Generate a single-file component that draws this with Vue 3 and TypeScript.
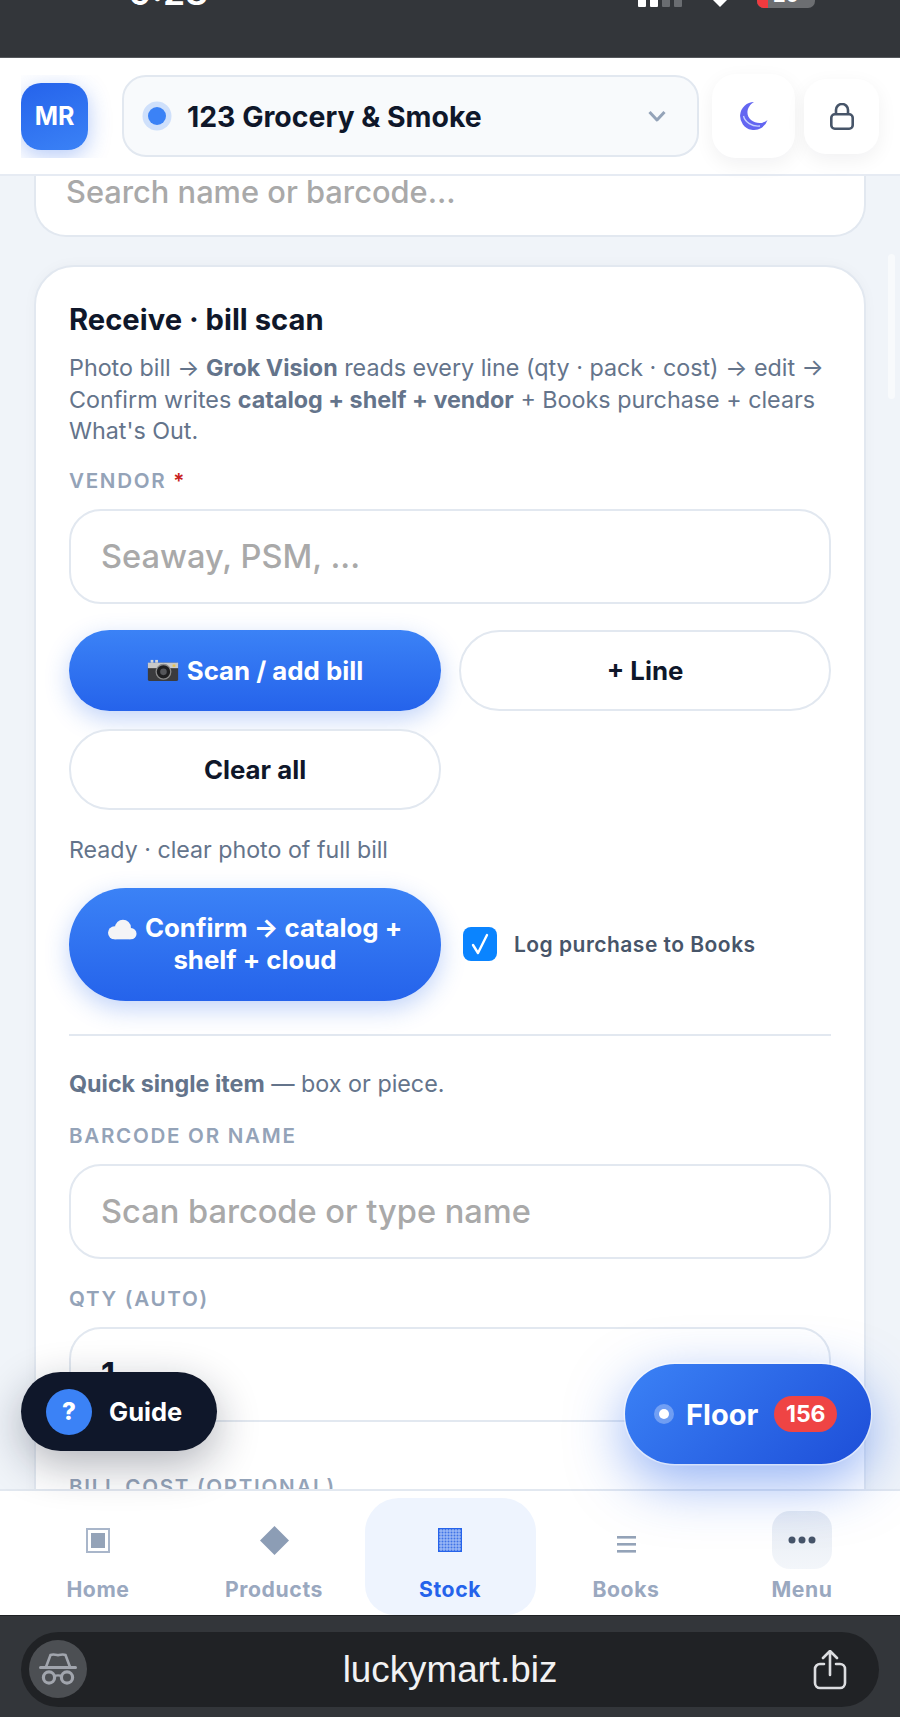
<script setup lang="ts">
interface Tab {
  label: string
  icon: string
  active?: boolean
}

const tabs: Tab[] = [
  { label: 'Home', icon: 'home' },
  { label: 'Products', icon: 'diamond' },
  { label: 'Stock', icon: 'grid', active: true },
  { label: 'Books', icon: 'lines' },
  { label: 'Menu', icon: 'dots' }
]

// little grid glyph for the Stock tab
const gridLines = [3, 6, 9, 12, 15, 18, 21]
</script>

<template>
  <div class="phone">
    <div class="status-bar">
      <span class="time">9:28</span>
      <div class="status-icons">
        <div class="signal"><i></i><i></i><i class="dim"></i><i class="dim"></i></div>
        <span class="wifi"></span>
        <div class="battery"><span class="battery-red"></span><span class="battery-num">20</span></div>
      </div>
    </div>

    <header class="topbar">
      <div class="avatar-wrap"><div class="avatar">MR</div></div>
      <div class="store-select">
        <span class="store-dot"></span>
        <span class="store-name">123 Grocery &amp; Smoke</span>
        <svg class="chevron" width="20" height="14" viewBox="0 0 20 14" fill="none">
          <path d="M2.500 3l7.500 8 7.500-8" stroke="#94a3b8" stroke-width="3" stroke-linejoin="round" />
        </svg>
      </div>
      <button class="icon-btn moon-btn">
        <svg width="30" height="30" viewBox="0 0 30 30">
          <path d="M15 1A14 14 0 1 0 28.500 19C24 23 17 23 12 19 6 14 8 5 15 1z" fill="#6366f1" />
          <path d="M4.500 15C6 21 13 26 21 25" fill="none" stroke="#c7d2fe" stroke-width="1.300" />
        </svg>
      </button>
      <button class="icon-btn lock-btn">
        <svg width="24" height="27" viewBox="0 0 24 27" fill="none" stroke="#475569" stroke-width="2.600">
          <rect x="1.300" y="11.300" width="21.400" height="14.400" rx="3.500" />
          <path d="M6 11V7a6 6 0 0 1 12 0v4" />
        </svg>
      </button>
    </header>

    <main class="content">
      <div class="search-card">
        <span class="placeholder">Search name or barcode...</span>
      </div>

      <section class="card">
        <h2 class="card-title">Receive · bill scan</h2>
        <p class="desc">
          Photo bill → <b>Grok Vision</b> reads every line (qty · pack · cost) → edit →
          Confirm writes <b>catalog + shelf + vendor</b> + Books purchase + clears What's Out.
        </p>

        <label class="field-label">VENDOR <em>*</em></label>
        <div class="input"><span class="placeholder">Seaway, PSM, ...</span></div>

        <div class="btn-grid">
          <button class="btn primary">
            <svg class="emoji" width="32" height="22" viewBox="0 0 33 24">
              <rect x="0" y="4" width="33" height="20" rx="2" fill="#3b3b3d" />
              <rect x="0" y="4" width="33" height="6" fill="#c9c9c9" />
              <rect x="3" y="1" width="3" height="3" fill="#d8d8d8" />
              <rect x="8" y="1" width="3" height="3" fill="#d8d8d8" />
              <circle cx="17" cy="14" r="8" fill="#1f1f21" stroke="#8a8a8a" stroke-width="1.400" />
              <circle cx="17" cy="14" r="3.600" fill="#55565a" />
              <rect x="27" y="6" width="3" height="2.500" fill="#e8c34a" />
            </svg>
            Scan / add bill
          </button>
          <button class="btn plain">+ Line</button>
          <button class="btn plain">Clear all</button>
        </div>

        <p class="hint">Ready · clear photo of full bill</p>

        <div class="confirm-row">
          <button class="btn primary confirm">
            <span>
              <svg class="emoji cloud" width="29" height="21" viewBox="0 0 31 21" fill="#f4f4f6">
                <circle cx="16" cy="8.500" r="8.500" />
                <circle cx="7" cy="14" r="7" />
                <circle cx="24.500" cy="15" r="6" />
                <rect x="7" y="13" width="17" height="8" />
              </svg>
              Confirm → catalog + shelf + cloud
            </span>
          </button>
          <label class="check-row">
            <span class="checkbox">
              <svg width="24" height="26" viewBox="0 0 24 26" fill="none">
                <path d="M5 14l5 8L19 4" stroke="#fff" stroke-width="2.400" stroke-linecap="round" stroke-linejoin="round" />
              </svg>
            </span>
            Log purchase to Books
          </label>
        </div>

        <hr class="divider" />

        <p class="quick"><b>Quick single item</b> — box or piece.</p>

        <label class="field-label barcode-label">BARCODE OR NAME</label>
        <div class="input"><span class="placeholder">Scan barcode or type name</span></div>

        <label class="field-label qty-label">QTY (AUTO)</label>
        <div class="input"><span class="value">1</span></div>

        <label class="field-label cost-label">BILL COST (OPTIONAL)</label>
      </section>

      <div class="scroll-thumb"></div>
    </main>

    <nav class="tabbar">
      <div v-for="tab in tabs" :key="tab.label" class="tab" :class="{ active: tab.active }">
        <span class="tab-icon" :class="{ 'menu-icon': tab.icon === 'dots', 'lines-icon': tab.icon === 'lines' }">
          <svg v-if="tab.icon === 'home'" width="24" height="25" viewBox="0 0 24 25">
            <rect x="1" y="1" width="22" height="23" fill="none" stroke="#a9b6ca" stroke-width="2" />
            <rect x="5" y="5" width="14" height="15" fill="#94a3b8" />
          </svg>
          <svg v-else-if="tab.icon === 'diamond'" width="29" height="29" viewBox="0 0 29 29">
            <path d="M14.500 0L29 14.500 14.500 29 0 14.500z" fill="#8c9db5" />
          </svg>
          <svg v-else-if="tab.icon === 'grid'" width="24" height="24" viewBox="0 0 24 24">
            <rect x="0.500" y="0.500" width="23" height="23" fill="#3f73e6" stroke="#2563eb" />
            <path v-for="n in gridLines" :key="n" :d="`M${n} 1V23M1 ${n}H23`" stroke="#b9cffa" stroke-width="0.900" />
          </svg>
          <svg v-else-if="tab.icon === 'lines'" width="19" height="17" viewBox="0 0 19 17" fill="#94a3b8">
            <rect x="0" y="0" width="19" height="2.600" />
            <rect x="0" y="7" width="19" height="2.600" />
            <rect x="0" y="14" width="19" height="2.600" />
          </svg>
          <svg v-else width="28" height="8" viewBox="0 0 28 8" fill="#475569">
            <circle cx="4" cy="4" r="3.500" />
            <circle cx="14" cy="4" r="3.500" />
            <circle cx="24" cy="4" r="3.500" />
          </svg>
        </span>
        <span class="tab-label">{{ tab.label }}</span>
      </div>
    </nav>

    <div class="browser-bar">
      <div class="url-pill">
        <span class="incognito">
          <svg width="38" height="34" viewBox="0 0 38 34" fill="none" stroke="#a1a5ad">
            <path d="M7 15L11.500 3c2.500-1 5-.3 7.500.2 2.500-.5 5-1.200 7.500-.2L31 15" stroke-width="2.600" />
            <path d="M1.500 15.500h35" stroke-width="3" stroke-linecap="round" />
            <circle cx="10" cy="25.500" r="5.600" stroke-width="3.200" />
            <circle cx="28" cy="25.500" r="5.600" stroke-width="3.200" />
            <path d="M15 24.500c2.500-1.300 5.500-1.300 8 0" stroke-width="2.200" />
          </svg>
        </span>
        <span class="url">luckymart.biz</span>
        <svg class="share" width="34" height="40" viewBox="0 0 34 40" fill="none" stroke="#dcdde0" stroke-width="2.600" stroke-linecap="round" stroke-linejoin="round">
          <path d="M17 25V2M10 8l7-7 7 7" />
          <path d="M11 14H7a5 5 0 0 0-5 5v14a5 5 0 0 0 5 5h20a5 5 0 0 0 5-5V19a5 5 0 0 0-5-5h-4" />
        </svg>
      </div>
    </div>

    <button class="guide-fab"><span class="guide-q">?</span>Guide</button>
    <button class="floor-fab">
      <span class="floor-dot"></span>
      <span class="floor-text">Floor</span>
      <span class="floor-badge">156</span>
    </button>
  </div>
</template>

<style>
html,
body {
  margin: 0;
  background: #f0f4f9;
}
</style>

<style scoped>
.phone {
  position: relative;
  width: 900px;
  height: 1717px;
  display: flex;
  flex-direction: column;
  overflow: hidden;
  background: #f0f4f9;
  font-family: Inter, "Liberation Sans", sans-serif;
  color: #0f172a;
}

button {
  font-family: inherit;
  border: none;
  padding: 0;
}

/* device chrome, top */
.status-bar {
  position: relative;
  flex: 0 0 58px;
  background: #33363a;
  overflow: hidden;
  box-sizing: border-box;
  border-bottom: 1px solid #55585c;
}

.time {
  position: absolute;
  left: 129px;
  top: -26px;
  color: #fff;
  font-size: 35.500px;
  font-weight: 600;
  line-height: 38px;
}

.status-icons {
  position: absolute;
  left: 638px;
  top: -20px;
  display: flex;
  align-items: flex-start;
  gap: 25px;
}

.signal {
  display: flex;
  gap: 4px;
}

.signal i {
  width: 8px;
  height: 27px;
  border-radius: 1px;
  background: #fff;
}

.signal i.dim {
  background: #6a6d71;
}

.wifi {
  margin-top: 14px;
  width: 0;
  height: 0;
  border-left: 13px solid transparent;
  border-right: 13px solid transparent;
  border-top: 13px solid #fff;
}

.battery {
  position: relative;
  width: 58px;
  height: 24px;
  margin-top: 4px;
  margin-left: -1px;
  border-radius: 7px;
  background: #6c6e71;
  overflow: hidden;
}

.battery-red {
  position: absolute;
  inset: 0 auto 0 0;
  width: 11px;
  background: #f03a3f;
}

.battery-num {
  position: absolute;
  left: 0;
  right: 0;
  top: -1px;
  text-align: center;
  color: #fff;
  font-size: 20px;
  font-weight: 700;
}

/* app header */
.topbar {
  position: relative;
  z-index: 2;
  flex: 0 0 118px;
  box-sizing: border-box;
  display: flex;
  align-items: center;
  padding: 0 21px;
  background: #fff;
  border-bottom: 2px solid #e6ebf3;
}

.avatar-wrap {
  flex: 0 0 101px;
  height: 83px;
  display: flex;
  align-items: center;
  overflow: hidden;
}

.avatar {
  width: 67px;
  height: 67px;
  border-radius: 20px;
  display: flex;
  align-items: center;
  justify-content: center;
  background: linear-gradient(160deg, #2563eb, #3b82f6);
  box-shadow: 0 6px 22px rgba(37, 99, 235, 0.34);
  color: #fff;
  font-size: 25px;
  font-weight: 700;
}

.store-select {
  flex: 0 0 577px;
  height: 82px;
  box-sizing: border-box;
  display: flex;
  align-items: center;
  padding: 0 30px 0 24px;
  border: 2px solid #e2e8f0;
  border-radius: 24px;
  background: #f8fafc;
}

.store-dot {
  width: 18px;
  height: 18px;
  border-radius: 50%;
  background: #3b82f6;
  box-shadow: 0 0 0 5.500px #cfe0fb;
}

.store-name {
  margin-left: 21px;
  flex: 1;
  font-size: 28.400px;
  font-weight: 700;
  white-space: nowrap;
}

.icon-btn {
  display: flex;
  align-items: center;
  justify-content: center;
  background: #fff;
  box-shadow: 0 6px 20px rgba(15, 23, 42, 0.06);
}

.moon-btn {
  margin-left: 13px;
  width: 83px;
  height: 84px;
  border-radius: 24px;
}

.lock-btn {
  margin-left: 9px;
  width: 75px;
  height: 75px;
  border-radius: 22px;
}

/* scrolled page */
.content {
  position: relative;
  flex: 1;
  min-height: 0;
  overflow: hidden;
  padding: 0 34px;
  display: flex;
  flex-direction: column;
  gap: 28px;
}

.search-card {
  flex: none;
  height: 61px;
  box-sizing: border-box;
  display: flex;
  align-items: flex-start;
  padding: 0 30px;
  background: #fff;
  border: 2px solid #e2e8f0;
  border-top: none;
  border-radius: 0 0 32px 32px;
}

.search-card .placeholder {
  font-size: 30.800px;
  line-height: 32px;
}

.placeholder {
  color: #a9a9a9;
  font-size: 32.600px;
  font-weight: 500;
  white-space: nowrap;
}

.card {
  flex: none;
  box-sizing: border-box;
  padding: 36px 33px 80px;
  background: #fff;
  border: 2px solid #e2e8f0;
  border-radius: 40px;
  box-shadow: 0 0 14px rgba(15, 23, 42, 0.03);
}

.card-title {
  margin: 0;
  font-size: 29.200px;
  line-height: 34px;
  font-weight: 700;
}

.desc {
  margin: 15px 0 0;
  font-size: 23.300px;
  line-height: 31.500px;
  color: #64748b;
}

.desc b,
.quick b {
  font-weight: 700;
}

.field-label {
  display: block;
  margin-top: 22px;
  font-size: 20.600px;
  line-height: 24px;
  font-weight: 600;
  letter-spacing: 1.700px;
  color: #94a3b8;
}

.field-label em {
  font-style: normal;
  color: #c81e1e;
}

.barcode-label {
  margin-top: 25px;
}

.qty-label {
  margin-top: 28px;
}

.cost-label {
  margin-top: 53px;
}

.input {
  margin-top: 16px;
  height: 95px;
  box-sizing: border-box;
  display: flex;
  align-items: center;
  padding: 0 30px;
  border: 2px solid #e2e8f0;
  border-radius: 32px;
  background: #fff;
}

.value {
  font-size: 32.600px;
  font-weight: 700;
}

.btn-grid {
  margin-top: 26px;
  display: grid;
  grid-template-columns: 1fr 1fr;
  gap: 18px;
}

.btn {
  height: 81px;
  border-radius: 41px;
  display: flex;
  align-items: center;
  justify-content: center;
  font-size: 25.800px;
  font-weight: 700;
  text-align: center;
}

.primary {
  color: #fff;
  background: linear-gradient(180deg, #3b82f6, #2563eb);
  box-shadow: 0 8px 24px rgba(37, 99, 235, 0.28);
}

.plain {
  color: #0f172a;
  background: #fff;
  border: 2px solid #e2e8f0;
}

.emoji {
  margin-right: 8px;
  vertical-align: -3px;
}

.cloud {
  margin-right: 2px;
}

.hint {
  margin: 26px 0 0;
  font-size: 23.200px;
  line-height: 28px;
  color: #64748b;
}

.confirm-row {
  margin-top: 24px;
  display: grid;
  grid-template-columns: 372px 1fr;
  column-gap: 22px;
  align-items: center;
}

.confirm {
  height: 113px;
  width: 372px;
  border-radius: 57px;
  line-height: 32px;
  padding: 0 20px;
}

.check-row {
  display: flex;
  align-items: center;
  gap: 17px;
  font-size: 21px;
  font-weight: 600;
  letter-spacing: 0.480px;
  color: #475569;
  white-space: nowrap;
}

.checkbox {
  flex: none;
  width: 34px;
  height: 34px;
  border-radius: 8px;
  background: #0a84ff;
  display: flex;
  align-items: center;
  justify-content: center;
}

.divider {
  margin: 33px 0 0;
  border: none;
  height: 2px;
  background: #e2e8f0;
}

.quick {
  margin: 33px 0 0;
  font-size: 23.300px;
  line-height: 30px;
  color: #64748b;
}

.scroll-thumb {
  position: absolute;
  right: 5px;
  top: 78px;
  width: 7px;
  height: 145px;
  border-radius: 4px;
  background: rgba(255, 255, 255, 0.55);
}

/* bottom tabs */
.tabbar {
  position: relative;
  z-index: 1;
  flex: 0 0 126px;
  box-sizing: border-box;
  display: grid;
  grid-template-columns: repeat(5, 176px);
  padding: 7px 10px 0;
  background: #fff;
  border-top: 2px solid #e2e8f0;
}

.tab {
  position: relative;
  display: flex;
  flex-direction: column;
  align-items: center;
}

.tab.active {
  margin: 0 2.500px;
  border-radius: 34px 34px 30px 30px;
  background: #eef4fe;
}

.tab-icon {
  height: 64px;
  margin-top: 10px;
  display: flex;
  align-items: center;
  justify-content: center;
}

.lines-icon {
  padding-top: 8px;
  height: 56px;
}

.menu-icon {
  width: 60px;
  height: 58px;
  margin-top: 13px;
  margin-bottom: 3px;
  border-radius: 18px;
  background: linear-gradient(180deg, #e6ebf3, #f3f6fa);
}

.tab-label {
  margin-top: 4px;
  font-size: 21.200px;
  line-height: 26px;
  font-weight: 700;
  letter-spacing: 0.600px;
  color: #9aa8bf;
}

.tab.active .tab-label {
  color: #2563eb;
}

/* device chrome, bottom */
.browser-bar {
  flex: 0 0 102px;
  box-sizing: border-box;
  padding: 16px 21px 0;
  background: #33363a;
  border-top: 1px solid #1f2124;
}

.url-pill {
  position: relative;
  height: 75px;
  display: flex;
  align-items: center;
  justify-content: center;
  border-radius: 38px;
  background: #202225;
}

.incognito {
  position: absolute;
  left: 8px;
  top: 8px;
  width: 58px;
  height: 58px;
  border-radius: 50%;
  background: #4c4f53;
  display: flex;
  align-items: center;
  justify-content: center;
}

.url {
  color: #f2f2f3;
  font-family: "Liberation Sans", sans-serif;
  font-size: 36.800px;
  font-weight: 400;
}

.share {
  position: absolute;
  right: 32px;
  top: 18px;
}

/* floating buttons */
.guide-fab {
  position: absolute;
  z-index: 3;
  left: 21px;
  top: 1372px;
  width: 196px;
  height: 79px;
  box-sizing: border-box;
  padding-left: 25px;
  display: flex;
  align-items: center;
  gap: 17px;
  border-radius: 40px;
  background: #0f172a;
  color: #fff;
  font-size: 25.500px;
  font-weight: 700;
  box-shadow: 0 14px 44px rgba(15, 23, 42, 0.32);
}

.guide-q {
  width: 46px;
  height: 46px;
  border-radius: 50%;
  background: #3b82f6;
  display: flex;
  align-items: center;
  justify-content: center;
  font-size: 24px;
  font-weight: 800;
}

.floor-fab {
  position: absolute;
  z-index: 3;
  left: 625px;
  top: 1364px;
  width: 246px;
  height: 100px;
  box-sizing: border-box;
  padding-left: 28px;
  display: flex;
  align-items: center;
  border-radius: 50px;
  color: #fff;
  background: linear-gradient(135deg, #3b82f6, #1d4ed8);
  box-shadow: 0 0 0 1.500px rgba(255, 255, 255, 0.45), 0 18px 56px rgba(37, 99, 235, 0.5);
}

.floor-dot {
  width: 10px;
  height: 10px;
  margin: 0 6px;
  border-radius: 50%;
  background: #fff;
  box-shadow: 0 0 0 5px rgba(255, 255, 255, 0.3);
}

.floor-text {
  margin-left: 11px;
  font-size: 29px;
  font-weight: 700;
}

.floor-badge {
  margin-left: 16px;
  width: 63px;
  height: 36px;
  border-radius: 18px;
  background: #ef4444;
  display: flex;
  align-items: center;
  justify-content: center;
  font-size: 23px;
  font-weight: 700;
}
</style>
